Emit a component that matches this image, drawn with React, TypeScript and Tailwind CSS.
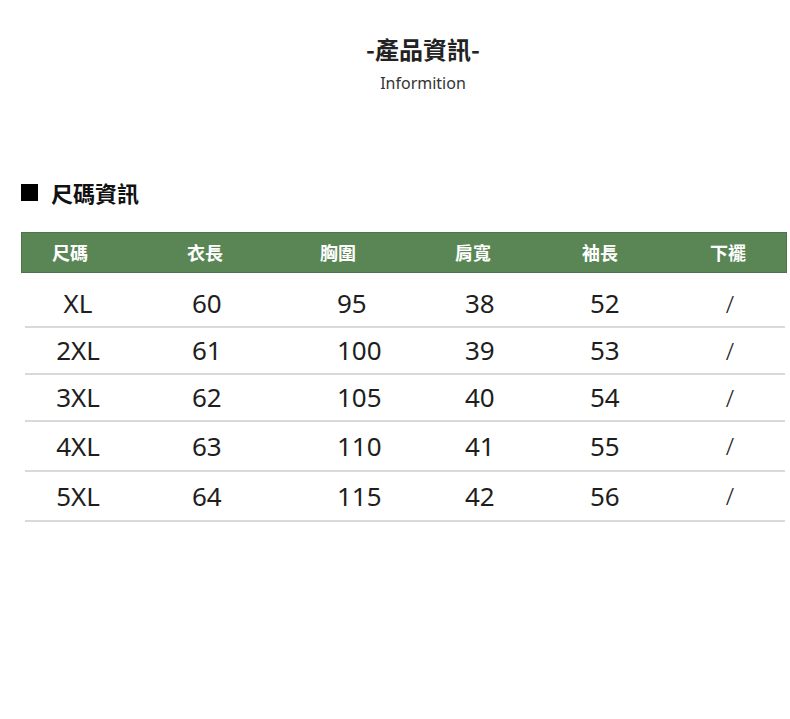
import React from "react";

const rows = [
  ["XL", "60", "95", "38", "52", "/"],
  ["2XL", "61", "100", "39", "53", "/"],
  ["3XL", "62", "105", "40", "54", "/"],
  ["4XL", "63", "110", "41", "55", "/"],
  ["5XL", "64", "115", "42", "56", "/"],
];

const cjk = { fontFamily: '"Noto Sans CJK TC", "Noto Sans", sans-serif' };
const latin = { fontFamily: '"Noto Sans", "Noto Sans CJK TC", sans-serif' };

export default function App() {
  return (
    <div className="w-[790px] h-[719px] bg-white overflow-hidden" style={cjk}>
      <div className="flex flex-col items-center pt-[33px] pl-[56px]">
        <div className="text-[24px] leading-[32px] font-bold text-[#222]">-產品資訊-</div>
        <div className="mt-[7px] text-[16px] leading-[22px] text-[#333]" style={latin}>
          Informition
        </div>
      </div>

      <div className="mt-[84px] flex items-center pl-[21px] h-[28px]">
        <div className="w-[17px] h-[17px] bg-black" />
        <div className="ml-[13px] text-[22px] leading-[28px] font-bold text-[#111]">尺碼資訊</div>
      </div>

      <div className="mt-[26px] ml-[21px] w-[766px] h-[41px] bg-[#5a8656] border border-[#4b7548] flex items-center pl-[30px] text-white font-bold text-[18px]">
        <div className="w-[135px]">尺碼</div>
        <div className="w-[133px]">衣長</div>
        <div className="w-[135px]">胸圍</div>
        <div className="w-[127px]">肩寬</div>
        <div className="w-[128px]">袖長</div>
        <div>下襬</div>
      </div>

      <div className="ml-[25px] w-[760px] mt-[8px]" style={latin}>
        {rows.map((r, i) => (
          <div
            key={r[0]}
            className={`flex items-center border-b-2 border-[#d9d9d9] text-[26px] text-[#1e1e1e] ${
              i < 3 ? "h-[47px]" : "h-[50px]"
            }`}
          >
            <div className="w-[106px] text-center">{r[0]}</div>
            <div className="w-[206px] pl-[61px]">{r[1]}</div>
            <div className="w-[128px]">{r[2]}</div>
            <div className="w-[125px]">{r[3]}</div>
            <div className="w-[125px]">{r[4]}</div>
            <div className="w-[30px] text-center text-[24px] font-light">{r[5]}</div>
          </div>
        ))}
      </div>
    </div>
  );
}
